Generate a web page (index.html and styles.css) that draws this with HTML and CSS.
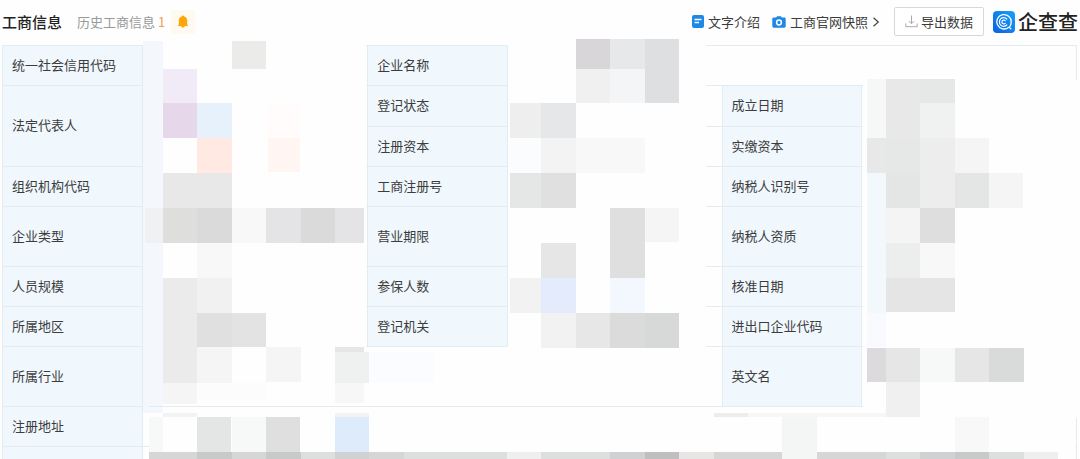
FILE: index.html
```html
<!DOCTYPE html>
<html lang="zh-CN">
<head>
<meta charset="utf-8">
<title>工商信息</title>
<link rel="stylesheet" href="styles.css">
</head>
<body>
<header class="bar">
  <h1 class="title">工商信息</h1>
  <a class="history" href="#history">历史工商信息 <span class="count">1</span></a>
  <button class="bell" type="button" aria-label="订阅提醒">
    <svg width="10" height="13" viewBox="0 0 10 13"><path fill="#fda60a" d="M5 .4c.7 0 1.100.4 1.200 1 1.900.6 3 1.900 3 3.800v4.300l.8.9v.6H0v-.6l.8-.9V5.200c0-1.900 1.100-3.200 3-3.800.1-.6.5-1 1.200-1zM3.200 11h3.600c-.2 1-.9 1.600-1.800 1.600S3.400 12 3.200 11z"/></svg>
  </button>
  <nav class="tools">
    <a class="tool" href="#intro">
      <svg width="12" height="13" viewBox="0 0 12 13"><rect width="12" height="13" rx="2" fill="#1e88e5"/><path d="M2.500 4.500h7M2.500 7.500h4.500" stroke="#fff" stroke-width="1.300"/></svg>
      文字介绍</a>
    <a class="tool" href="#snapshot">
      <svg width="14" height="12" viewBox="0 0 14 12"><path fill="#1e88e5" d="M4.200 1.500 5 .3h4l.8 1.200h2.500c.8 0 1.400.6 1.400 1.400v7.400c0 .8-.6 1.400-1.400 1.400H1.700c-.8 0-1.400-.6-1.400-1.400V2.900c0-.8.6-1.400 1.400-1.400z"/><circle cx="7" cy="6.500" r="2.400" fill="#1e88e5" stroke="#fff" stroke-width="1.500"/></svg>
      工商官网快照
      <svg width="8" height="12" viewBox="0 0 8 12"><path d="M1.500 1.800 6.300 6 1.500 10.200" fill="none" stroke="#444" stroke-width="1.200"/></svg></a>
  </nav>
  <button class="export" type="button">
    <svg width="13" height="13" viewBox="0 0 13 13"><path d="M6.500.5v8M4 6.200l2.500 2.500L9 6.200M.8 8.500v3.200h11.400V8.500" fill="none" stroke="#aaa" stroke-width="1"/></svg>
    导出数据</button>
  <a class="brand" href="#home">
    <svg width="22" height="22" viewBox="0 0 22 22"><defs><linearGradient id="g" x1="0" y1="1" x2="1" y2="0"><stop offset="0" stop-color="#0a62dc"/><stop offset="1" stop-color="#15a2fb"/></linearGradient></defs><rect width="22" height="22" rx="4" fill="url(#g)"/><g fill="none" stroke="#fff" stroke-linecap="round"><path d="M15.500 16.400A7.200 7.200 0 1 1 18.200 11c0 2.200-.6 3.900-1.900 5.200l1.500 1.700" stroke-width="1.300"/><path d="M13.800 14a4.300 4.300 0 1 1 0-6" stroke-width="1.200"/><path d="M12.200 12.300a1.900 1.900 0 1 1 0-2.600" stroke-width="1.200"/></g></svg>
    <span>企查查</span></a>
</header>
<main class="sheet">
  <table class="info">
    <colgroup><col class="key"><col class="val"><col class="key"><col class="mid"><col class="key"><col class="end"></colgroup>
    <tr><th scope="row">统一社会信用代码</th><td></td><th scope="row">企业名称</th><td colspan="3"></td></tr>
    <tr class="mid-row"><th scope="row" rowspan="2">法定代表人</th><td rowspan="2"></td><th scope="row">登记状态</th><td></td><th scope="row">成立日期</th><td></td></tr>
    <tr><th scope="row">注册资本</th><td></td><th scope="row">实缴资本</th><td></td></tr>
    <tr><th scope="row">组织机构代码</th><td></td><th scope="row">工商注册号</th><td></td><th scope="row">纳税人识别号</th><td></td></tr>
    <tr class="tall"><th scope="row">企业类型</th><td></td><th scope="row">营业期限</th><td></td><th scope="row">纳税人资质</th><td></td></tr>
    <tr><th scope="row">人员规模</th><td></td><th scope="row">参保人数</th><td></td><th scope="row">核准日期</th><td></td></tr>
    <tr><th scope="row">所属地区</th><td></td><th scope="row">登记机关</th><td></td><th scope="row">进出口企业代码</th><td></td></tr>
    <tr class="tall"><th scope="row">所属行业</th><td colspan="3"></td><th scope="row">英文名</th><td></td></tr>
    <tr><th scope="row">注册地址</th><td colspan="5"></td></tr>
    <tr class="last"><th></th><td colspan="5"></td></tr>
  </table>
  <svg class="mosaic" viewBox="2 45 1075 414" preserveAspectRatio="none" shape-rendering="crispEdges" aria-hidden="true">
    <g fill="#fefefe">
      <path d="M143 39h223v367H143zM508 39h198v367H508zM863 80h217v338H863zM706 348h14v58h-14zM366 348h142v58H366zM150 408h925v51H150z"/>
    </g>
    <path fill="#f4f8fd" d="M143 41h20v372h-20z"/>
    <path fill="#e2edf2" d="M149 406h713v1H149z"/>
    <!-- left value column -->
    <path fill="#ebebea" d="M232 41h34v28h-34z"/>
    <path fill="#f1ebf8" d="M163 69h34v34h-34z"/>
    <path fill="#e6d7ea" d="M163 103h34v35h-34z"/>
    <path fill="#e6f1fb" d="M197 103h35v35h-35z"/>
    <path fill="#fffcfb" d="M268 103h32v35h-32z"/>
    <path fill="#ffe9e2" d="M197 138h35v35h-35z"/>
    <path fill="#fff5f2" d="M268 138h32v34h-32z"/>
    <path fill="#e8e8e8" d="M163 173h69v35h-69z"/>
    <path fill="#f0f1f3" d="M145 208h18v35h-18z"/>
    <path fill="#dededd" d="M163 208h34v35h-34z"/>
    <path fill="#dadada" d="M197 208h35v35h-35zM301 208h34v35h-34z"/>
    <path fill="#f8f8f8" d="M232 208h34v35h-34zM197 243h35v35h-35z"/>
    <path fill="#e4e4e6" d="M266 208h35v35h-35zM335 208h29v35h-29z"/>
    <path fill="#ebebeb" d="M163 278h34v105h-34z"/>
    <path fill="#f1f1f1" d="M197 278h35v35h-35z"/>
    <path fill="#e0e0e0" d="M197 313h35v34h-35z"/>
    <path fill="#e3e3e3" d="M232 313h34v34h-34z"/>
    <path fill="#f5f5f5" d="M197 347h35v36h-35zM266 347h35v35h-35zM163 383h34v21h-34z"/>
    <path fill="#fcfcfc" d="M197 383h69v17h-69z"/>
    <path fill="#e6e6e6" d="M335 347h29v5h-29z"/>
    <path fill="#eff0f0" d="M335 352h34v31h-34z"/>
    <path fill="#f7f7f7" d="M335 383h29v20h-29z"/>
    <path fill="#fbfcff" d="M369 352h65v30h-65z"/>
    <path fill="#f3f3f3" d="M163 413h34v4h-34zM335 413h34v4h-34z"/>
    <path fill="#f7f8f8" d="M149 417h14v35h-14zM232 417h34v35h-34z"/>
    <path fill="#e4e6e6" d="M197 417h34v35h-34z"/>
    <path fill="#dfdfdf" d="M266 417h34v35h-34z"/>
    <path fill="#deebfa" d="M335 417h34v35h-34z"/>
    <!-- middle value column -->
    <path fill="#d8d6d9" d="M576 39h34v30h-34z"/>
    <path fill="#e7e8ea" d="M610 39h35v30h-35z"/>
    <path fill="#dedfe0" d="M645 39h34v64h-34z"/>
    <path fill="#f0f0f0" d="M576 69h34v34h-34z"/>
    <path fill="#f4f5f7" d="M610 69h35v34h-35z"/>
    <path fill="#eeeeee" d="M510 103h31v35h-31z"/>
    <path fill="#e6e7e9" d="M541 103h35v35h-35z"/>
    <path fill="#fafcfe" d="M510 138h31v35h-31z"/>
    <path fill="#f3f3f3" d="M541 138h35v35h-35z"/>
    <path fill="#f8f8f8" d="M576 138h69v35h-69z"/>
    <path fill="#e5e6e6" d="M510 173h31v35h-31z"/>
    <path fill="#e0e0e0" d="M541 173h35v35h-35z"/>
    <path fill="#dfdfdf" d="M610 208h35v70h-35z"/>
    <path fill="#f5f5f5" d="M645 208h34v34h-34z"/>
    <path fill="#e6e6e6" d="M541 243h35v35h-35z"/>
    <path fill="#f2f2f2" d="M510 278h31v35h-31zM541 313h35v35h-35z"/>
    <path fill="#e4ebfc" d="M541 278h35v35h-35z"/>
    <path fill="#f3f8fe" d="M610 278h35v35h-35z"/>
    <path fill="#e7e7e7" d="M576 313h34v35h-34z"/>
    <path fill="#dbdbdb" d="M610 313h35v35h-35z"/>
    <path fill="#d7d9d9" d="M645 313h34v35h-34z"/>
    <!-- right value column -->
    <path fill="#f6f8f8" d="M867 79h19v59h-19z"/>
    <path fill="#e8e8e8" d="M886 79h34v59h-34zM867 138h19v35h-19z"/>
    <path fill="#e6e7e7" d="M920 79h35v24h-35zM886 138h34v35h-34z"/>
    <path fill="#f0f1f1" d="M920 103h35v35h-35z"/>
    <path fill="#ededed" d="M920 138h35v70h-35z"/>
    <path fill="#f5f5f5" d="M955 138h34v35h-34zM989 173h34v35h-34z"/>
    <path fill="#f2f8fc" d="M867 173h19v140h-19z"/>
    <path fill="#e4e5e5" d="M886 173h34v35h-34zM955 173h34v35h-34z"/>
    <path fill="#f4f4f5" d="M886 208h34v35h-34z"/>
    <path fill="#dedede" d="M920 208h35v35h-35z"/>
    <path fill="#eceeee" d="M886 243h34v35h-34z"/>
    <path fill="#f8f8f8" d="M920 243h35v35h-35zM955 417h34v35h-34z"/>
    <path fill="#e5e5e5" d="M886 278h69v34h-69z"/>
    <path fill="#f8fafe" d="M867 313h19v34h-19z"/>
    <path fill="#dddadd" d="M867 348h19v34h-19z"/>
    <path fill="#e6e6e6" d="M886 348h34v34h-34zM955 348h34v34h-34z"/>
    <path fill="#f7f8f8" d="M920 348h35v34h-35z"/>
    <path fill="#d9dada" d="M989 348h35v34h-35z"/>
    <path fill="#f0f0f0" d="M886 382h34v35h-34z"/>
    <path fill="#ededed" d="M714 413h34v4h-34z"/>
    <path fill="#f7f7f7" d="M748 413h138v4H748z"/>
    <path fill="#f4f5f5" d="M782 417h35v42h-35z"/>
    <!-- bottom strip -->
    <path fill="#d6d6d6" d="M149 452h48v7h-48zM232 452h34v7h-34zM369 452h35v7h-35zM714 452h68v7h-68zM817 452h69v7h-69z"/>
    <path fill="#c8c9c9" d="M197 452h35v7h-35zM266 452h35v7h-35zM955 452h34v7h-34z"/>
    <path fill="#dddede" d="M301 452h34v7h-34zM404 452h103v7H404zM541 452h69v7h-69zM886 452h34v7h-34zM989 452h35v7h-35z"/>
    <path fill="#cfd1d3" d="M335 452h34v7h-34zM610 452h35v7h-35zM920 452h35v7h-35z"/>
    <path fill="#efefef" d="M507 452h34v7h-34zM1024 452h34v7h-34z"/>
    <path fill="#bfbfbf" d="M645 452h34v7h-34z"/>
    <path fill="#e7e6e5" d="M679 452h35v7h-35z"/>
  </svg>
</main>
</body>
</html>
```
FILE: styles.css
```css
* { box-sizing: border-box; }
body {
  margin: 0;
  background: #fefefe;
  color: #3c3c3c;
  font: 13px/18px "Noto Sans CJK SC", "Noto Sans", sans-serif;
}
a { color: inherit; text-decoration: none; }
button { font: inherit; color: inherit; cursor: pointer; }
svg { display: block; flex: none; }
.bar {
  display: flex;
  align-items: center;
  height: 45px;
  padding: 0 2px 2px;
  white-space: nowrap;
}
.title { margin: 0 15px 0 0; font-size: 15px; font-weight: 500; color: #222; }
.history { color: #999; }
.count { color: #f0a050; }
.bell {
  display: grid;
  place-items: center;
  width: 24px;
  height: 24px;
  margin-left: 6px;
  padding: 0;
  border: 0;
  background: #fffaf0;
}
.tools { display: flex; gap: 12px; margin-left: auto; }
.tool { display: flex; align-items: center; gap: 4px; }
.export {
  display: flex;
  align-items: center;
  gap: 3px;
  height: 29px;
  margin: 0 9px 0 14px;
  padding: 0 10px;
  border: 1px solid #d8d8d8;
  border-radius: 2px;
  background: #fff;
}
.brand {
  display: flex;
  align-items: center;
  gap: 3px;
  font-size: 20px;
  font-weight: 500;
  color: #222;
}
.sheet { position: relative; margin: 0 3px 0 2px; }
.info {
  width: 100%;
  table-layout: fixed;
  border-collapse: collapse;
}
.key { width: 13%; }
.val { width: 21%; }
.mid { width: 20%; }
.info th, .info td {
  height: 40px;
  padding: 0 9px 2px;
  border: 1px solid #e2edf2;
}
.info th {
  background: #f0f8fe;
  font-weight: 400;
  text-align: left;
}
.info .mid-row th, .info .mid-row td { height: 41px; }
.info .tall th, .info .tall td { height: 60px; }
.info .last th, .info .last td { height: 12px; border-bottom: 0; }
.mosaic {
  position: absolute;
  inset: 0;
  width: 100%;
  height: 100%;
  overflow: visible;
  pointer-events: none;
}
```
